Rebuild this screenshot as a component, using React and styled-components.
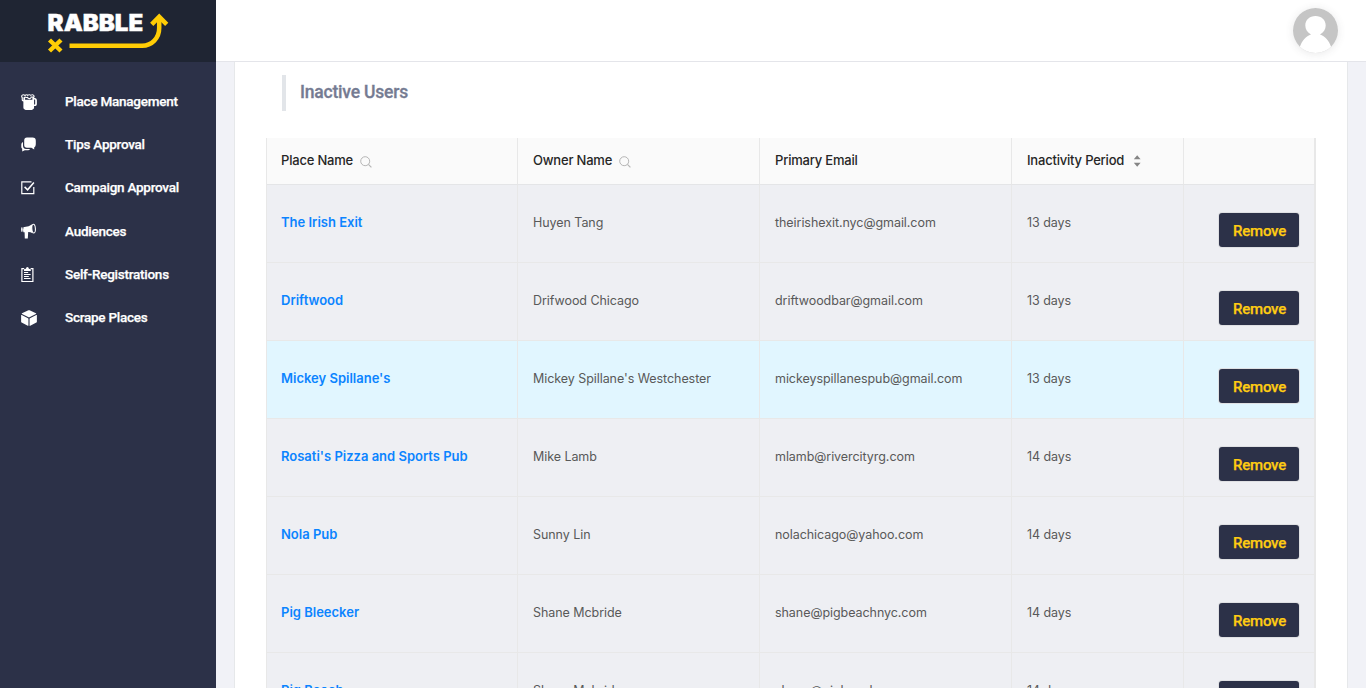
import React from "react";
import styled, { createGlobalStyle } from "styled-components";
import { IoMdBeer, IoMdCube } from "react-icons/io";

const GlobalStyle = createGlobalStyle`
  *, *::before, *::after { box-sizing: border-box; }
  html, body { margin: 0; height: 100%; overflow: hidden; }
  body { background: #f1f2f7; font-family: Inter, "Liberation Sans", sans-serif; }
`;

const Page = styled.div`
  display: flex;
  height: 100vh;
  overflow: hidden;
`;

const Sidebar = styled.aside`
  flex: 0 0 216px;
  background: #2c3148;
`;

const Brand = styled.div`
  height: 62px;
  padding: 11px 0 0 46px;
  background: #1f2533;
  svg { display: block; overflow: visible; }
`;

const Menu = styled.nav`
  padding-top: 18px;
`;

const MenuItem = styled.a`
  display: flex;
  align-items: center;
  height: 43.2px;
  padding-left: 20px;
  color: #fff;
  font: 500 13.5px/16px Roboto, sans-serif;
  letter-spacing: -0.25px;
  -webkit-text-stroke: 0.25px #fff;
  white-space: nowrap;
`;

const MenuIcon = styled.span`
  display: flex;
  width: 45px;
  svg { display: block; }
`;

const MenuLabel = styled.span`
  padding-bottom: 1px;
`;

const Main = styled.div`
  flex: 1;
  min-width: 0;
  display: flex;
  flex-direction: column;
`;

const TopBar = styled.header`
  flex: 0 0 62px;
  display: flex;
  justify-content: flex-end;
  padding: 8px 28px 0 0;
  background: #fff;
  border-bottom: 1px solid #e4e5ea;
`;

const Avatar = styled.div`
  width: 45px;
  height: 45px;
  border-radius: 50%;
  overflow: hidden;
  box-shadow: 0 1px 8px rgba(69, 65, 78, 0.12);
  svg { display: block; }
`;

const Card = styled.main`
  flex: 1;
  min-height: 0;
  margin: 0 18px;
  padding: 13px 32px 0 31px;
  overflow: hidden;
  background: #fff;
  border: solid #e6e8ea;
  border-width: 0 1px;
`;

const Title = styled.h1`
  height: 36px;
  margin: 0 0 27px 16px;
  padding-left: 14px;
  border-left: 4px solid #e2e5e9;
  color: #757b92;
  font: 500 17.5px/34px Roboto, sans-serif;
  letter-spacing: -0.2px;
  -webkit-text-stroke: 0.3px #757b92;
`;

const Table = styled.table`
  width: 1050px;
  table-layout: fixed;
  border-collapse: separate;
  border-spacing: 0;
  border: solid #e8e8e8;
  border-width: 0 1px 0 1px;
  font-size: 13px;
`;

const HeadCell = styled.th`
  height: 47px;
  padding: 0 14px 3px 15px;
  text-align: left;
  font-weight: 500;
  letter-spacing: -0.2px;
  color: #262626;
  background: #fafafa;
  border-right: 1px solid #e8e8e8;
  border-bottom: 1px solid #e4e5e7;
  white-space: nowrap;
  &:first-child { padding-left: 14px; }
  svg { display: inline-block; vertical-align: -3px; margin-left: 7px; }
`;

const Row = styled.tr`
  background: ${(p) => (p.$active ? "#e1f6ff" : "#eeeff3")};
`;

const Cell = styled.td`
  height: 78px;
  padding: 0 14px 3px 15px;
  font-size: 12.5px;
  letter-spacing: -0.06px;
  color: #595959;
  border-right: 1px solid #e8e8e8;
  border-bottom: 1px solid #e8e8e8;
  white-space: nowrap;
  &:first-child { padding-left: 14px; }
`;

const ActionCell = styled(Cell)`
  padding: 14px 15px 1px 0;
  text-align: right;
`;

const PlaceLink = styled.a`
  color: #0b84ff;
  font-size: 13px;
  font-weight: 600;
  letter-spacing: 0;
`;

const RemoveButton = styled.button`
  display: inline-block;
  width: 80px;
  height: 34px;
  padding: 2px 0 0 1px;
  border: 0;
  border-radius: 3px;
  background: #2c3148;
  box-shadow: 0 0 0 1px #dfe0e3;
  color: #ffcc12;
  font: 500 15px Roboto, sans-serif;
  letter-spacing: -0.2px;
  -webkit-text-stroke: 0.25px #ffcc12;
  vertical-align: middle;
`;

const Logo = () => (
  <svg width="124" height="44" viewBox="0 0 124 44">
    <text x="1.6" y="20" textLength="95.5" lengthAdjust="spacingAndGlyphs" fill="#fff" stroke="#fff" strokeWidth="0.4" fontFamily="Inter, sans-serif" fontWeight="900" fontSize="22.5">RABBLE</text>
    <path d="M3.5 29 L15 40 M15 29 L3.5 40" stroke="#ffcd05" strokeWidth="4.4" fill="none" />
    <path d="M23.5 34.7 H96 C106 34.7 113.2 27 113.2 17 V6" stroke="#ffcd05" strokeWidth="4.5" fill="none" />
    <path d="M105.7 13.4 L113.2 5.8 L120.7 13.4" stroke="#ffcd05" strokeWidth="4.5" fill="none" />
  </svg>
);

const ChatIcon = () => (
  <svg width="17" height="17" viewBox="0 0 17 17">
    <path d="M7 1.6 H12.6 Q15.8 1.6 15.8 4.8 V8.2 Q15.8 10.6 14.2 11.4 V13.6 L11.4 11.8 H7 Q4.2 11.8 4.2 9 V4.6 Q4.2 1.6 7 1.6Z" fill="#fff" />
    <path d="M3 6 Q1.3 6.5 1.3 8.5 V11 Q1.3 12.3 2.2 12.8 V15.6 L4.8 14.2 H8 Q9.5 14.2 10 13 H6 Q3 12.9 3 9.6Z" fill="#fff" />
  </svg>
);

const CheckIcon = () => (
  <svg width="17" height="17" viewBox="0 0 17 17" fill="none" stroke="#fff">
    <path d="M11.5 2.8 H1.8 V14.6 H13.8 V8" strokeWidth="1.2" />
    <path d="M4.6 7.9 L7.6 10.8 L13.9 3.5" strokeWidth="1.5" />
  </svg>
);

const MegaphoneIcon = () => (
  <svg width="17" height="17" viewBox="0 0 17 17">
    <path d="M3.6 3.9 Q8.5 4.2 12.3 1.3 Q11.2 5.6 12.6 10.2 Q10.2 8.9 8.2 9 L7.8 15.6 H4.8 L4.6 9.2 H3.4 Q2.700 6.500 3.600 3.900Z" fill="#fff" />
    <ellipse cx="1.9" cy="6.6" rx="0.8" ry="2.5" fill="#fff" />
    <ellipse cx="13.6" cy="5.6" rx="1.8" ry="4.4" fill="none" stroke="#fff" strokeWidth="1.1" transform="rotate(-4 13.6 5.6)" />
  </svg>
);

const ClipboardIcon = () => (
  <svg width="17" height="17" viewBox="0 0 17 17" fill="none" stroke="#fff">
    <path d="M4.2 2.7 H1.9 V15.5 H12.9 V2.7 H10.6" strokeWidth="1.2" />
    <path d="M4 5 V3.2 L5.9 2.7 Q6.1 1 7.4 1 Q8.7 1 8.9 2.7 L10.8 3.2 V5Z" fill="#fff" stroke="none" />
    <path d="M4 6.5 H8.2 M4 8.5 H10.6 M4 10.5 H8.8 M4 12.5 H10.6" strokeWidth="1" />
  </svg>
);

const SearchIcon = () => (
  <svg width="12" height="12" viewBox="0 0 12 12" fill="none" stroke="#b5b5b5">
    <circle cx="5.2" cy="5.2" r="4.5" strokeWidth="1" />
    <path d="M8.4 8.4 L11.4 11.4" strokeWidth="1.1" />
  </svg>
);

const SortIcon = () => (
  <svg width="11" height="13" viewBox="-2 0 11 13" fill="#858585">
    <path d="M4.2 0.3 L7.6 4.3 H0.8Z M4.2 11.7 L7.6 7.7 H0.8Z" />
  </svg>
);

const menu = [
  ["Place Management", <IoMdBeer size={18} />],
  ["Tips Approval", <ChatIcon />],
  ["Campaign Approval", <CheckIcon />],
  ["Audiences", <MegaphoneIcon />],
  ["Self-Registrations", <ClipboardIcon />],
  ["Scrape Places", <IoMdCube size={18} />],
];

const users = [
  ["The Irish Exit", "Huyen Tang", "theirishexit.nyc@gmail.com", 13],
  ["Driftwood", "Drifwood Chicago", "driftwoodbar@gmail.com", 13],
  ["Mickey Spillane's", "Mickey Spillane's Westchester", "mickeyspillanespub@gmail.com", 13],
  ["Rosati's Pizza and Sports Pub", "Mike Lamb", "mlamb@rivercityrg.com", 14],
  ["Nola Pub", "Sunny Lin", "nolachicago@yahoo.com", 14],
  ["Pig Bleecker", "Shane Mcbride", "shane@pigbeachnyc.com", 14],
  ["Pig Beach", "Shane Mcbride", "shane@pigbeachnyc.com", 14],
];

export default function App() {
  return (
    <Page>
      <GlobalStyle />
      <Sidebar>
        <Brand><Logo /></Brand>
        <Menu>
          {menu.map(([label, icon]) => (
            <MenuItem key={label}><MenuIcon>{icon}</MenuIcon><MenuLabel>{label}</MenuLabel></MenuItem>
          ))}
        </Menu>
      </Sidebar>
      <Main>
        <TopBar>
          <Avatar>
            <svg width="45" height="45" viewBox="0 0 45 45">
              <rect width="45" height="45" fill="#c5c5c5" />
              <path d="M6.5 40 C9 32 13 28.5 18 26.5 C14.5 24.5 12.3 21.5 12.3 17.5 C12.3 12 16.5 8 22.5 8 C28.5 8 32.7 12 32.7 17.5 C32.7 21.5 30.5 24.5 27 26.5 C32 28.5 36 32 38.5 40 V45 H6.5Z" fill="#fff" />
            </svg>
          </Avatar>
        </TopBar>
        <Card>
          <Title>Inactive Users</Title>
          <Table>
            <colgroup>
              <col style={{ width: 251 }} />
              <col style={{ width: 242 }} />
              <col style={{ width: 252 }} />
              <col style={{ width: 172 }} />
              <col style={{ width: 131 }} />
            </colgroup>
            <thead>
              <tr>
                <HeadCell>Place Name<SearchIcon /></HeadCell>
                <HeadCell>Owner Name<SearchIcon /></HeadCell>
                <HeadCell>Primary Email</HeadCell>
                <HeadCell>Inactivity Period<SortIcon /></HeadCell>
                <HeadCell />
              </tr>
            </thead>
            <tbody>
              {users.map(([place, owner, email, days], i) => (
                <Row key={place} $active={i === 2}>
                  <Cell><PlaceLink>{place}</PlaceLink></Cell>
                  <Cell>{owner}</Cell>
                  <Cell>{email}</Cell>
                  <Cell>{days} days</Cell>
                  <ActionCell><RemoveButton>Remove</RemoveButton></ActionCell>
                </Row>
              ))}
            </tbody>
          </Table>
        </Card>
      </Main>
    </Page>
  );
}
